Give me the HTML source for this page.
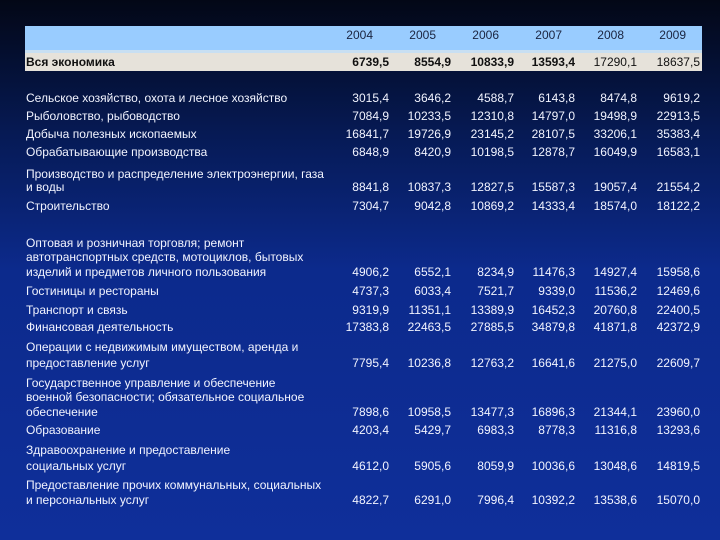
<!DOCTYPE html>
<html><head><meta charset="utf-8"><style>
html,body{margin:0;padding:0}
body{width:720px;height:540px;overflow:hidden;position:relative;background:linear-gradient(180deg,#030716 0%,#061a55 25%,#0c2a8c 50%,#0f2f9a 100%);font-family:"Liberation Sans","DejaVu Sans",sans-serif;font-size:12px;color:#f2f4ff}
.hb{position:absolute;left:25px;top:26px;width:677px;height:26px;background:#99ccff}
.hs{position:absolute;left:25px;top:50px;width:677px;height:3px;background:#c8dff2}
.tb{position:absolute;left:25px;top:53px;width:677px;height:18px;background:#e6e2da}
.r{position:absolute;left:0;width:720px;height:14px;line-height:14px;white-space:nowrap}
.r span{position:absolute}
.l{left:26px}
.c1,.c2,.c3,.c4,.c5,.c6{width:70px;text-align:right}
.c1{left:319px}.c2{left:381px}.c3{left:444px}.c4{left:505px}.c5{left:567px}.c6{left:630px}
.h{color:#1a2440;}
.b{color:#111;font-weight:bold}
</style></head><body>
<div class="hb"></div><div class="hs"></div><div class="tb"></div>
<div class="r h" style="top:28px"><span class="c1" style="left:303px">2004</span><span class="c2" style="left:366px">2005</span><span class="c3" style="left:429px">2006</span><span class="c4" style="left:492px">2007</span><span class="c5" style="left:554px">2008</span><span class="c6" style="left:616px">2009</span></div>
<div class="r b" style="top:55px"><span class="l">Вся экономика</span><span class="c1">6739,5</span><span class="c2">8554,9</span><span class="c3">10833,9</span><span class="c4">13593,4</span><span class="c5" style="font-weight:normal">17290,1</span><span class="c6" style="font-weight:normal">18637,5</span></div>
<div class="r" style="top:91px"><span class="l">Сельское хозяйство, охота и лесное хозяйство</span><span class="c1">3015,4</span><span class="c2">3646,2</span><span class="c3">4588,7</span><span class="c4">6143,8</span><span class="c5">8474,8</span><span class="c6">9619,2</span></div>
<div class="r" style="top:109px"><span class="l">Рыболовство, рыбоводство</span><span class="c1">7084,9</span><span class="c2">10233,5</span><span class="c3">12310,8</span><span class="c4">14797,0</span><span class="c5">19498,9</span><span class="c6">22913,5</span></div>
<div class="r" style="top:127px"><span class="l">Добыча полезных ископаемых</span><span class="c1">16841,7</span><span class="c2">19726,9</span><span class="c3">23145,2</span><span class="c4">28107,5</span><span class="c5">33206,1</span><span class="c6">35383,4</span></div>
<div class="r" style="top:145px"><span class="l">Обрабатывающие производства</span><span class="c1">6848,9</span><span class="c2">8420,9</span><span class="c3">10198,5</span><span class="c4">12878,7</span><span class="c5">16049,9</span><span class="c6">16583,1</span></div>
<div class="r" style="top:167px"><span class="l">Производство и распределение электроэнергии, газа</span></div>
<div class="r" style="top:180px"><span class="l">и воды</span><span class="c1">8841,8</span><span class="c2">10837,3</span><span class="c3">12827,5</span><span class="c4">15587,3</span><span class="c5">19057,4</span><span class="c6">21554,2</span></div>
<div class="r" style="top:199px"><span class="l">Строительство</span><span class="c1">7304,7</span><span class="c2">9042,8</span><span class="c3">10869,2</span><span class="c4">14333,4</span><span class="c5">18574,0</span><span class="c6">18122,2</span></div>
<div class="r" style="top:236px"><span class="l">Оптовая и розничная торговля; ремонт</span></div>
<div class="r" style="top:250px"><span class="l">автотранспортных средств, мотоциклов, бытовых</span></div>
<div class="r" style="top:265px"><span class="l">изделий и предметов личного пользования</span><span class="c1">4906,2</span><span class="c2">6552,1</span><span class="c3">8234,9</span><span class="c4">11476,3</span><span class="c5">14927,4</span><span class="c6">15958,6</span></div>
<div class="r" style="top:284px"><span class="l">Гостиницы и рестораны</span><span class="c1">4737,3</span><span class="c2">6033,4</span><span class="c3">7521,7</span><span class="c4">9339,0</span><span class="c5">11536,2</span><span class="c6">12469,6</span></div>
<div class="r" style="top:303px"><span class="l">Транспорт и связь</span><span class="c1">9319,9</span><span class="c2">11351,1</span><span class="c3">13389,9</span><span class="c4">16452,3</span><span class="c5">20760,8</span><span class="c6">22400,5</span></div>
<div class="r" style="top:320px"><span class="l">Финансовая деятельность</span><span class="c1">17383,8</span><span class="c2">22463,5</span><span class="c3">27885,5</span><span class="c4">34879,8</span><span class="c5">41871,8</span><span class="c6">42372,9</span></div>
<div class="r" style="top:340px"><span class="l">Операции с недвижимым имуществом, аренда и</span></div>
<div class="r" style="top:356px"><span class="l">предоставление услуг</span><span class="c1">7795,4</span><span class="c2">10236,8</span><span class="c3">12763,2</span><span class="c4">16641,6</span><span class="c5">21275,0</span><span class="c6">22609,7</span></div>
<div class="r" style="top:376px"><span class="l">Государственное управление и обеспечение</span></div>
<div class="r" style="top:390px"><span class="l">военной безопасности; обязательное социальное</span></div>
<div class="r" style="top:405px"><span class="l">обеспечение</span><span class="c1">7898,6</span><span class="c2">10958,5</span><span class="c3">13477,3</span><span class="c4">16896,3</span><span class="c5">21344,1</span><span class="c6">23960,0</span></div>
<div class="r" style="top:423px"><span class="l">Образование</span><span class="c1">4203,4</span><span class="c2">5429,7</span><span class="c3">6983,3</span><span class="c4">8778,3</span><span class="c5">11316,8</span><span class="c6">13293,6</span></div>
<div class="r" style="top:443px"><span class="l">Здравоохранение и предоставление</span></div>
<div class="r" style="top:459px"><span class="l">социальных услуг</span><span class="c1">4612,0</span><span class="c2">5905,6</span><span class="c3">8059,9</span><span class="c4">10036,6</span><span class="c5">13048,6</span><span class="c6">14819,5</span></div>
<div class="r" style="top:478px"><span class="l">Предоставление прочих коммунальных, социальных</span></div>
<div class="r" style="top:493px"><span class="l">и персональных услуг</span><span class="c1">4822,7</span><span class="c2">6291,0</span><span class="c3">7996,4</span><span class="c4">10392,2</span><span class="c5">13538,6</span><span class="c6">15070,0</span></div>
</body></html>
